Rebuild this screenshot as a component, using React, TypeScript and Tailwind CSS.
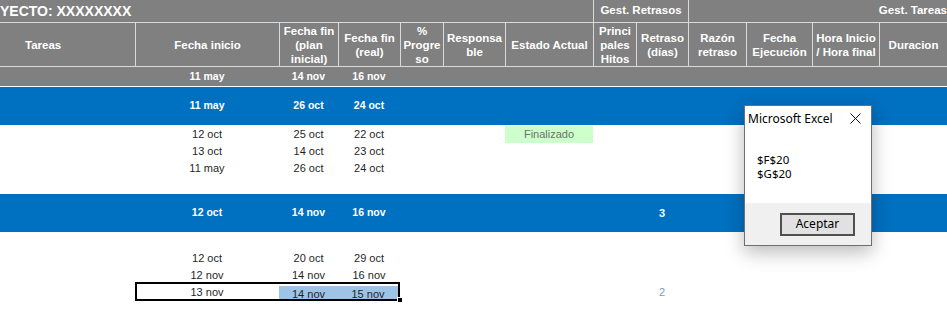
import React from 'react';

const cols =
  'grid grid-cols-[135px_144px_59px_62px_43px_62px_88px_43px_52px_58px_66px_67px_68px]';

const headers: string[][] = [
  ['Fecha inicio'],
  ['Fecha fin', '(plan', 'inicial)'],
  ['Fecha fin', '(real)'],
  ['%', 'Progre', 'so'],
  ['Responsa', 'ble'],
  ['Estado Actual'],
  ['Princi', 'pales', 'Hitos'],
  ['Retraso', '(días)'],
  ['Razón', 'retraso'],
  ['Fecha', 'Ejecución'],
  ['Hora Inicio', '/ Hora final'],
  ['Duracion'],
];

function DateRow({
  a,
  b,
  c,
  bold,
  extra,
}: {
  a: string;
  b: string;
  c: string;
  bold?: boolean;
  extra?: React.ReactNode;
}) {
  const t = bold ? 'font-bold text-[10.5px]' : 'text-[11px]';
  return (
    <div className={`${cols} h-[17px] items-center`}>
      <div />
      <div className={`text-center ${t}`}>{a}</div>
      <div className={`text-center ${t}`}>{b}</div>
      <div className={`text-center ${t}`}>{c}</div>
      {extra}
    </div>
  );
}

export default function App() {
  return (
    <div
      className="relative w-[947px] h-[311px] overflow-hidden bg-white text-[#1f1f1f]"
      style={{ fontFamily: '"Liberation Sans", Arial, sans-serif' }}
    >
      {/* title row */}
      <div className={`${cols} h-[23px] bg-[#808080] text-white border-b border-[#d9d9d9]`}>
        <div className="col-span-7 flex items-center text-[14px] font-bold leading-none whitespace-nowrap">
          YECTO: XXXXXXXX
        </div>
        <div className="col-span-2 border-l border-[#d9d9d9] flex items-center justify-center text-[11.5px] font-bold">
          Gest. Retrasos
        </div>
        <div className="col-span-4 border-l border-[#d9d9d9] flex items-center justify-end text-[11.5px] font-bold whitespace-nowrap">
          Gest. Tareas
        </div>
      </div>

      {/* column headers */}
      <div className={`${cols} h-[44px] bg-[#808080] text-white border-b border-[#d9d9d9] font-bold text-[11.5px] leading-[14px]`}>
        <div className="flex items-center pl-[25px]">Tareas</div>
        {headers.map((lines, i) => (
          <div
            key={i}
            className="border-l border-[#d9d9d9] flex flex-col items-center justify-center text-center whitespace-nowrap overflow-hidden"
          >
            {lines.map((l) => (
              <span key={l}>{l}</span>
            ))}
          </div>
        ))}
      </div>

      {/* summary gray row */}
      <div className={`${cols} h-[20px] bg-[#808080] text-white border-b border-white items-center font-bold text-[10.5px]`}>
        <div />
        <div className="text-center">11 may</div>
        <div className="text-center">14 nov</div>
        <div className="text-center">16 nov</div>
      </div>

      {/* blue group 1 */}
      <div className="h-[38px] bg-[#0070c0] text-white flex items-center">
        <div className="w-full">
          <DateRow a="11 may" b="26 oct" c="24 oct" bold />
        </div>
      </div>

      <div className="h-[69px] pt-px">
        <DateRow
          a="12 oct"
          b="25 oct"
          c="22 oct"
          extra={
            <>
              <div />
              <div />
              <div className="h-[17px] bg-[#ccffcc] text-[#707070] text-[11px] flex items-center justify-center">
                Finalizado
              </div>
            </>
          }
        />
        <DateRow a="13 oct" b="14 oct" c="23 oct" />
        <DateRow a="11 may" b="26 oct" c="24 oct" />
      </div>

      {/* blue group 2 */}
      <div className="h-[38px] bg-[#0070c0] text-white flex items-center">
        <div className="w-full">
          <DateRow
            a="12 oct"
            b="14 nov"
            c="16 nov"
            bold
            extra={
              <>
                <div />
                <div />
                <div />
                <div />
                <div className="text-center font-bold text-[11px]">3</div>
              </>
            }
          />
        </div>
      </div>

      <div className="pt-[18px]">
        <DateRow a="12 oct" b="20 oct" c="29 oct" />
        <DateRow a="12 nov" b="14 nov" c="16 nov" />
        <div className={`${cols} h-[17px] items-center text-[11px] relative`}>
          <div />
          <div className="text-center">13 nov</div>
          <div className="col-span-2 grid grid-cols-[59px_60px] h-[13px] w-[119px] bg-[#9dc3e6] items-center">
            <div className="text-center">14 nov</div>
            <div className="text-center">15 nov</div>
          </div>
          <div />
          <div />
          <div />
          <div />
          <div className="text-center text-[#8497b0]">2</div>
          <div className="absolute left-[135px] top-[-2px] w-[265px] h-[19px] border-2 border-black pointer-events-none" />
          <div className="absolute left-[397px] top-[13px] w-[6px] h-[6px] bg-black border border-white" />
        </div>
      </div>

      {/* Excel message box */}
      <div
        className="absolute left-[744px] top-[105px] w-[128px] h-[141px] bg-white border border-[#6e6e6e] shadow-[0_6px_18px_rgba(0,0,0,0.28)] flex flex-col text-black"
        style={{ fontFamily: '"Noto Sans", "Open Sans", sans-serif' }}
      >
        <div className="h-[25px] flex items-center justify-between pl-[3px] pr-[10px] text-[12px]">
          <span>Microsoft Excel</span>
          <svg width="11" height="11" viewBox="0 0 11 11">
            <path d="M0.5 0.5 L10.5 10.5 M10.5 0.5 L0.5 10.5" stroke="#111" strokeWidth="1" />
          </svg>
        </div>
        <div className="flex-1 pl-[12px] pt-[22px] text-[11.5px] leading-[14px]">
          <div>$F$20</div>
          <div>$G$20</div>
        </div>
        <div className="h-[42px] bg-[#f0f0f0] flex items-center justify-end pr-[16px]">
          <button className="w-[75px] h-[23px] border-2 border-[#505050] bg-[#e1e1e1] text-[12px] leading-none flex items-center justify-center">
            Aceptar
          </button>
        </div>
      </div>
    </div>
  );
}
